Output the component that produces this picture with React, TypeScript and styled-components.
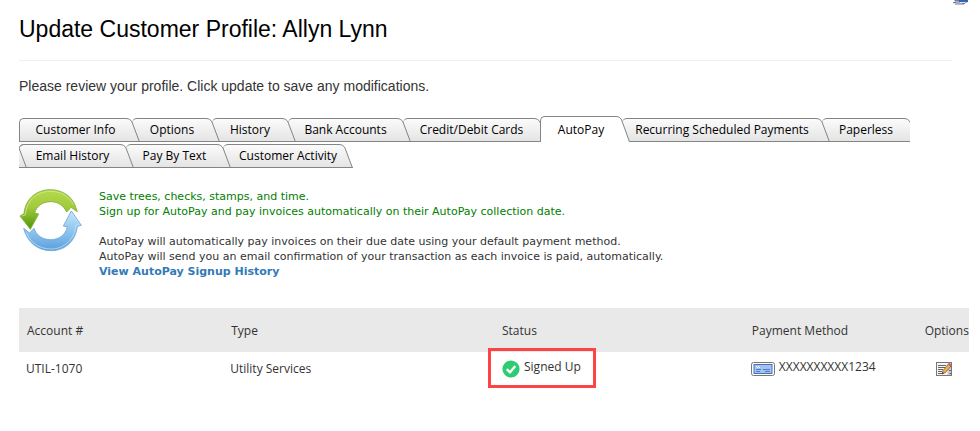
import React from "react";
import styled, { createGlobalStyle, css } from "styled-components";

const GlobalStyle = createGlobalStyle`
  *, *::before, *::after { box-sizing: border-box; }
  body {
    margin: 0;
    background: #fff;
    color: #333;
    font-family: "Open Sans", "Noto Sans", sans-serif;
    font-size: 12px;
  }
`;

const Page = styled.main`
  padding: 0 11px 20px 19px;
`;

const Header = styled.header`
  display: flex;
  justify-content: space-between;
  align-items: flex-start;
  height: 60px;
`;

const Title = styled.h1`
  margin: 14px 0 0;
  color: #000;
  font: 400 23px/30px "Liberation Sans", Arial, sans-serif;
`;

const Rule = styled.hr`
  margin: 0 17px 0 0;
  border: 0;
  border-top: 1px solid #eee;
`;

const Intro = styled.p`
  margin: 15px 0 20px;
  font: 14px/20px "Liberation Sans", Arial, sans-serif;
`;

const TabList = styled.div`
  display: flex;
  flex-direction: column;
`;

const TabRow = styled.div`
  display: flex;
  align-items: flex-end;
  height: 26px;
  isolation: isolate;
`;

const TabButton = styled.button<{ $width: number; $order: number; $active?: boolean; $cut?: boolean; $last?: boolean }>`
  position: relative;
  z-index: ${(p) => p.$order};
  flex: none;
  width: ${(p) => p.$width}px;
  height: 24px;
  padding: 0 0 0 ${(p) => (p.$last ? 8 : 0)}px;
  border: 0;
  background: none;
  color: #000;
  font: inherit;
  line-height: 24px;
  text-align: center;
  white-space: nowrap;
  cursor: pointer;
  overflow: ${(p) => (p.$cut ? "hidden" : "visible")};

  ${(p) =>
    p.$active &&
    css`
      z-index: 20;
      height: 26px;
      line-height: 28px;
    `}
`;

const TabFace = styled.span<{ $active?: boolean; $slanted?: boolean }>`
  position: absolute;
  inset: 0 6px 0 0;
  border: 1px solid #848484;
  border-right: 0;
  border-left-width: ${(p) => (p.$slanted ? 0 : 1)}px;
  border-radius: 5px 0 0 0;
  background: linear-gradient(#fbfbfb, #e4e4e4);

  ${(p) =>
    p.$active &&
    css`
      border-bottom: 0;
      background: #fff;
    `}
`;

const CapDrawing = styled.svg`
  position: absolute;
  right: -8px;
  bottom: 0;
`;

const LeadDrawing = styled.svg`
  position: absolute;
  left: 0;
  bottom: 0;
`;

const TabLabel = styled.span`
  position: relative;
`;

const Gradient = () => (
  <defs>
    <linearGradient id="tabFill" x1="0" y1="0" x2="0" y2="24" gradientUnits="userSpaceOnUse">
      <stop offset="0" stopColor="#fbfbfb" />
      <stop offset="1" stopColor="#e4e4e4" />
    </linearGradient>
  </defs>
);

function Cap({ active }: { active?: boolean }) {
  if (active) {
    return (
      <CapDrawing width="14" height="26" aria-hidden="true">
        <path d="M0 .5C3 .5 5 2 6 5L13.5 26H0Z" fill="#fff" />
        <path d="M0 .5C3 .5 5 2 6 5L13.5 26" fill="none" stroke="#848484" />
      </CapDrawing>
    );
  }
  return (
    <CapDrawing width="14" height="24" aria-hidden="true">
      <Gradient />
      <path d="M0 .5C3 .5 5 2 6 4L13.5 24H0Z" fill="url(#tabFill)" />
      <path d="M0 .5C3 .5 5 2 6 4L13.5 24M0 23.5H14" fill="none" stroke="#848484" />
    </CapDrawing>
  );
}

type TabInfo = { label: string; width: number; active?: boolean; cut?: boolean; lead?: boolean; last?: boolean };

const tabRows: TabInfo[][] = [
  [
    { label: "Customer Info", width: 113 },
    { label: "Options", width: 80 },
    { label: "History", width: 76 },
    { label: "Bank Accounts", width: 115 },
    { label: "Credit/Debit Cards", width: 137 },
    { label: "AutoPay", width: 82, active: true },
    { label: "Recurring Scheduled Payments", width: 200 },
    { label: "Paperless", width: 88, cut: true },
  ],
  [
    { label: "Email History", width: 107, lead: true },
    { label: "Pay By Text", width: 97 },
    { label: "Customer Activity", width: 122, last: true },
  ],
];

function Tabs() {
  return (
    <TabList role="tablist">
      {tabRows.map((row, r) => (
        <TabRow key={r} role="presentation">
          {row.map((tab, i) => (
            <TabButton
              key={tab.label}
              type="button"
              role="tab"
              aria-selected={!!tab.active}
              $width={tab.width}
              $order={10 - i}
              $active={tab.active}
              $cut={tab.cut}
              $last={tab.last}
            >
              <TabFace $active={tab.active} $slanted={(i > 0 && !tab.active) || tab.lead} />
              {tab.lead && (
                <LeadDrawing width="8" height="24" aria-hidden="true">
                  <path d="M0 4L7.5 24M0 4Q1 1 4 .5" fill="none" stroke="#848484" />
                </LeadDrawing>
              )}
              <Cap active={tab.active} />
              <TabLabel>{tab.label}</TabLabel>
            </TabButton>
          ))}
        </TabRow>
      ))}
    </TabList>
  );
}

const Notice = styled.section`
  display: flex;
  align-items: flex-start;
  gap: 16px;
  margin: 21px 0 29px;
  font: 11px/15px "DejaVu Sans", Verdana, sans-serif;
`;

const NoticeText = styled.div`
  display: flex;
  flex-direction: column;
  align-items: flex-start;
`;

const Paragraph = styled.p<{ $green?: boolean }>`
  margin: 0 0 ${(p) => (p.$green ? 15 : 0)}px;
  color: ${(p) => (p.$green ? "#008000" : "#333")};
`;

const HistoryLink = styled.a`
  color: #337ab7;
  font-weight: 700;
  text-decoration: none;
`;

function ArrowsIcon() {
  return (
    <svg width="64" height="64" viewBox="28 26 192 192" aria-hidden="true">
      <defs>
        <linearGradient id="green" x1="0" y1="0" x2="0" y2="1">
          <stop offset="0" stopColor="#b5d94e" />
          <stop offset=".45" stopColor="#a2cb3c" />
          <stop offset="1" stopColor="#4f9408" />
        </linearGradient>
        <linearGradient id="blue" x1="0" y1="0" x2="0" y2="1">
          <stop offset="0" stopColor="#c4e6fb" />
          <stop offset=".5" stopColor="#8ec5ee" />
          <stop offset="1" stopColor="#5c9fdc" />
        </linearGradient>
      </defs>
      <path
        d="M62 147L31 107L43 100C46 58 79 28 122 28C157 28 184 47 195 72L203 94L184 81L171 95C162 76 145 64 124 64C98 64 80 78 75 98L87 101Z"
        fill="url(#green)" stroke="#7faf31" strokeWidth="2.5" strokeLinejoin="round"
      />
      <path d="M37 107L47 104C49 61 82 33 122 33C155 33 179 50 190 72" fill="none" stroke="#d2e996" strokeWidth="3" opacity=".8" />
      <path
        d="M185 92L215 135L203 138C198 182 167 211 124 211C83 211 52 185 42 144L60 158L73 144C79 164 98 178 122 178C149 178 169 162 173 139L161 137Z"
        fill="url(#blue)" stroke="#69a6da" strokeWidth="2.5" strokeLinejoin="round"
      />
      <path d="M185 98L209 132L199 134C194 178 164 206 124 206C88 206 61 185 50 157" fill="none" stroke="#c8e5f8" strokeWidth="3" opacity=".7" />
    </svg>
  );
}

const AccountTable = styled.table`
  width: 100%;
  table-layout: fixed;
  border-collapse: collapse;
`;

const Column = styled.col<{ $share?: string }>`
  width: ${(p) => p.$share ?? "auto"};
`;

const HeadCell = styled.th`
  height: 44px;
  padding: 0 0 0 8px;
  background: #e9e9e9;
  font-weight: 400;
  text-align: left;
  white-space: nowrap;

  &:last-child {
    padding-left: 6px;
  }
`;

const Cell = styled.td<{ $icon?: boolean }>`
  position: relative;
  height: 33px;
  padding: 0 0 0 ${(p) => (p.$icon ? 8 : 7)}px;
  white-space: nowrap;
`;

const IconText = styled.span`
  display: flex;
  align-items: center;
  gap: 4px;
  line-height: 28px;
`;

const StatusText = styled.span`
  padding-bottom: 4px;
`;

const Highlight = styled.span`
  position: absolute;
  top: -4px;
  left: -6px;
  width: 108px;
  height: 40px;
  border: 3px solid #fc4444;
  pointer-events: none;
`;

const EditButton = styled.button`
  display: block;
  margin-left: 9px;
  padding: 0;
  border: 0;
  background: none;
  line-height: 0;
  cursor: pointer;
`;

function CheckIcon() {
  return (
    <svg width="18" height="18" viewBox="0 0 18 18" aria-hidden="true">
      <circle cx="9" cy="9" r="8.6" fill="#2ecc71" />
      <path d="M4.8 9.2L8 12.3L13.3 6" fill="none" stroke="#fff" strokeWidth="2.4" />
    </svg>
  );
}

function CheckPaperIcon() {
  return (
    <svg width="24" height="14" viewBox="0 0 24 14" aria-hidden="true">
      <rect x=".5" y=".5" width="23" height="13" rx="2" fill="#fff" stroke="#777" />
      <rect x="3" y="2.5" width="18" height="9" fill="#a4c3ef" stroke="#4670b8" />
      <path d="M5 4.5h1m1 0h1M6 5.5h1m1 0h1" stroke="#fff" />
      <path d="M5 7.5h5m2 0h7M5 9.5h4m5 0h5" stroke="#4e7cc7" />
    </svg>
  );
}

function EditIcon() {
  return (
    <svg width="16" height="14" viewBox="0 0 16 14" aria-hidden="true">
      <rect x=".5" y=".5" width="15" height="13" fill="#f4f4f4" stroke="#777" />
      <path d="M11.5 1H15V13H11.5Z" fill="#ccc" />
      <path d="M2 3.5h8M2 5.5h7M2 7.5h5M2 9.5h4M2 11.5h4M13 4.5h2M13 8.5h2" stroke="#666" />
      <path d="M6 12L7 8.5L12.5 2L15 4L9.5 10.5Z" fill="#e9b04f" stroke="#76502a" strokeWidth=".7" />
      <path d="M12 2.5L13.5 1L15.5 3L14.5 4.5Z" fill="#ce577c" />
      <path d="M6 12L6.5 10L8 11.3Z" fill="#333" />
      <path d="M13.5 11.5h1.5" stroke="#555" />
    </svg>
  );
}

function CornerIcon() {
  return (
    <svg width="16" height="5" viewBox="0 0 16 5" aria-hidden="true">
      <path d="M1 0H15V2L10 4.5H5L0 3V2H2Z" fill="#a9a9c9" />
      <path d="M2 0H6V1H2Z" fill="#7777a5" />
      <path d="M6 1H15" stroke="#1454ac" strokeWidth="1.6" />
      <path d="M7 2.5H12" stroke="#e5e5f5" />
      <path d="M2 4.5H11" stroke="#bbb" />
      <path d="M0 2.5H3M9 3.5H12" stroke="#7676a0" />
    </svg>
  );
}

export default function App() {
  return (
    <>
      <GlobalStyle />
      <Page>
        <Header>
          <Title>Update Customer Profile: Allyn Lynn</Title>
          <CornerIcon />
        </Header>
        <Rule />
        <Intro>Please review your profile. Click update to save any modifications.</Intro>
        <Tabs />
        <Notice>
          <ArrowsIcon />
          <NoticeText>
            <Paragraph $green>
              Save trees, checks, stamps, and time.
              <br />
              Sign up for AutoPay and pay invoices automatically on their AutoPay collection date.
            </Paragraph>
            <Paragraph>
              AutoPay will automatically pay invoices on their due date using your default payment method.
              <br />
              AutoPay will send you an email confirmation of your transaction as each invoice is paid, automatically.
            </Paragraph>
            <HistoryLink href="#history">View AutoPay Signup History</HistoryLink>
          </NoticeText>
        </Notice>
        <AccountTable>
          <colgroup>
            <Column $share="21.5%" />
            <Column $share="28.5%" />
            <Column $share="26.3%" />
            <Column $share="18.4%" />
            <Column />
          </colgroup>
          <thead>
            <tr>
              <HeadCell scope="col">Account #</HeadCell>
              <HeadCell scope="col">Type</HeadCell>
              <HeadCell scope="col">Status</HeadCell>
              <HeadCell scope="col">Payment Method</HeadCell>
              <HeadCell scope="col">Options</HeadCell>
            </tr>
          </thead>
          <tbody>
            <tr>
              <Cell>UTIL-1070</Cell>
              <Cell>Utility Services</Cell>
              <Cell $icon>
                <IconText>
                  <CheckIcon />
                  <StatusText>Signed Up</StatusText>
                </IconText>
                <Highlight />
              </Cell>
              <Cell>
                <IconText>
                  <CheckPaperIcon />
                  <StatusText>XXXXXXXXXX1234</StatusText>
                </IconText>
              </Cell>
              <Cell $icon>
                <EditButton type="button" aria-label="Edit">
                  <EditIcon />
                </EditButton>
              </Cell>
            </tr>
          </tbody>
        </AccountTable>
      </Page>
    </>
  );
}
